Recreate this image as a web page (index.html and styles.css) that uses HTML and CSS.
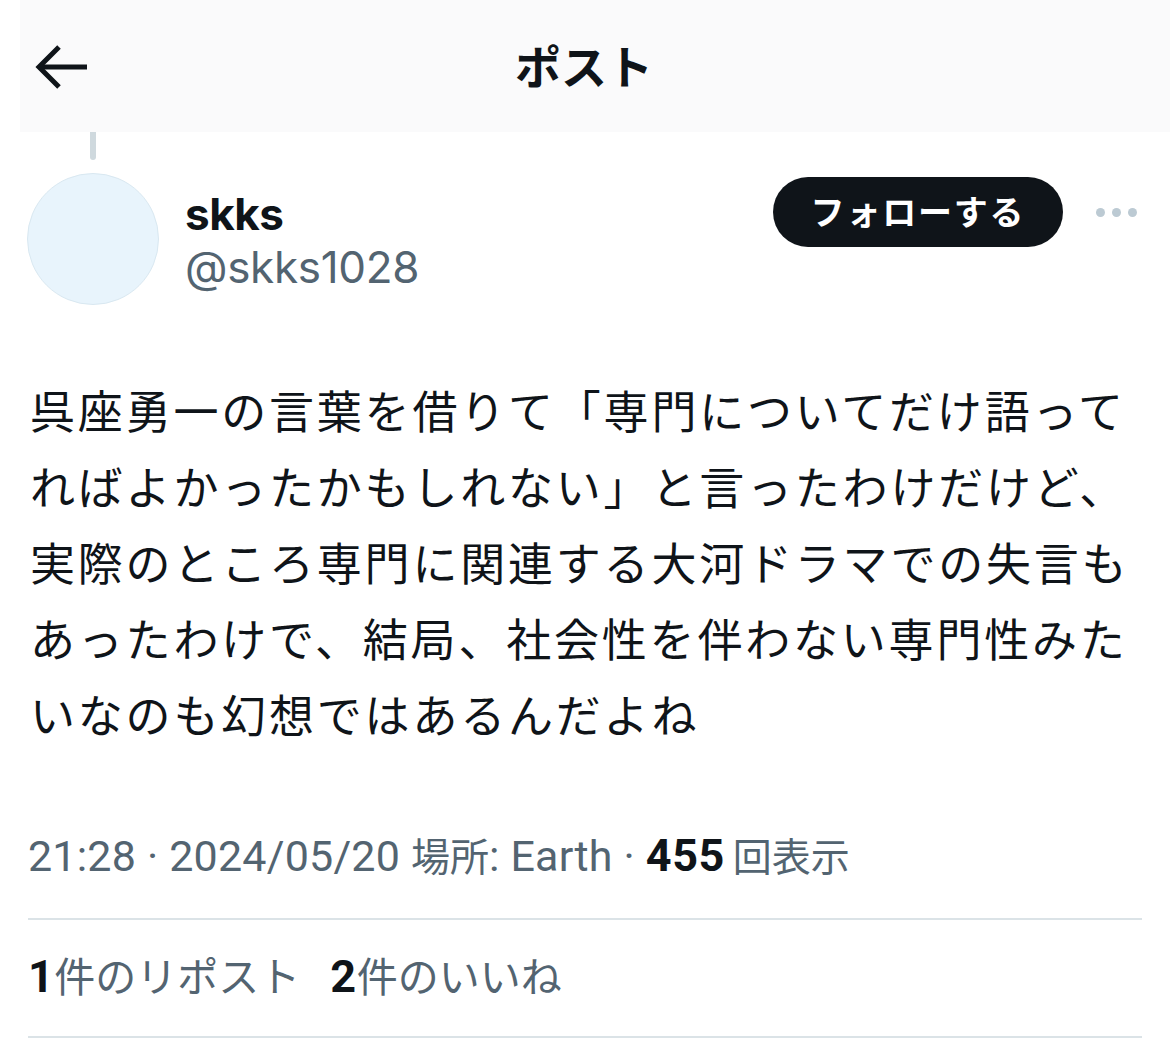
FILE: index.html
```html
<!DOCTYPE html>
<html lang="ja">
<head>
<meta charset="utf-8">
<link rel="stylesheet" href="styles.css">
</head>
<body>
<div class="page">
  <header class="topbar">
    <div class="back">
      <svg width="54" height="46" viewBox="0 0 54 46" fill="none" stroke="#0f1419" stroke-width="5" stroke-linecap="butt" stroke-linejoin="miter">
        <path d="M24 3 L4 23 L24 43"/>
        <path d="M4 23 H52"/>
      </svg>
    </div>
    <h1 class="title">ポスト</h1>
    <div></div>
  </header>

  <div class="thread"></div>

  <div class="author">
    <div class="avatar"></div>
    <div class="names">
      <div class="name">skks</div>
      <div class="handle">@skks1028</div>
    </div>
    <div class="actions">
      <button class="follow">フォローする</button>
      <div class="more"><span></span><span></span><span></span></div>
    </div>
  </div>

  <p class="text">呉座勇一の言葉を借りて「専門についてだけ語ってればよかったかもしれない」と言ったわけだけど、実際のところ専門に関連する大河ドラマでの失言もあったわけで、結局、社会性を伴わない専門性みたいなのも幻想ではあるんだよね</p>

  <div class="meta">21:28 · 2024/05/20 <span class="jp">場所</span>: Earth · <b>455</b><span class="jp views">回表示</span></div>

  <div class="stats"><b>1</b><span class="jp">件のリポスト</span><span class="gap"></span><b>2</b><span class="jp">件のいいね</span></div>
</div>
</body>
</html>
```

FILE: styles.css
```css
html, body {
  margin: 0;
  padding: 0;
  background: #ffffff;
}
body {
  font-family: "Inter", "Noto Sans CJK JP", sans-serif;
  color: #0f1419;
}
.page {
  width: 1170px;
  height: 1038px;
  overflow: hidden;
}
.topbar {
  display: grid;
  grid-template-columns: 1fr auto 1fr;
  align-items: center;
  height: 132px;
  margin-left: 20px;
  background: #fafafb;
}
.back {
  padding-left: 15px;
  display: flex;
  align-items: center;
  padding-top: 2px;
}
.title {
  margin: 0;
  font-family: "Noto Sans CJK JP", sans-serif;
  font-weight: 700;
  font-size: 46px;
  line-height: 1;
  position: relative;
  left: -11px;
  top: -2px;
}
.thread {
  width: 6px;
  height: 28px;
  margin-left: 90px;
  background: #cfd9de;
  border-radius: 0 0 3px 3px;
}
.author {
  display: flex;
  align-items: flex-start;
  margin-top: 13px;
  padding: 0 28px 0 27px;
}
.avatar {
  width: 132px;
  height: 132px;
  border-radius: 50%;
  background: #e8f4fc;
  border: 1px solid #d9e8f1;
  box-sizing: border-box;
  flex: none;
}
.names {
  margin-left: 26px;
  padding-top: 13px;
  flex: 1;
}
.name {
  font-weight: 700;
  font-size: 44px;
  line-height: 56px;
  letter-spacing: -0.5px;
}
.handle {
  font-size: 44px;
  line-height: 50px;
  color: #536471;
  letter-spacing: -0.3px;
}
.actions {
  display: flex;
  align-items: center;
  padding-top: 4px;
}
.follow {
  width: 290px;
  height: 70px;
  border: none;
  border-radius: 35px;
  background: #0f1419;
  color: #ffffff;
  font-family: "Noto Sans CJK JP", sans-serif;
  font-weight: 700;
  font-size: 34px;
  letter-spacing: 1.8px;
  padding: 0 0 3px;
}
.more {
  display: flex;
  gap: 7px;
  margin-left: 33px;
  margin-right: 5px;
}
.more span {
  width: 9px;
  height: 9px;
  border-radius: 50%;
  background: #bccad3;
}
.text {
  margin: 67px 28px 0 30px;
  font-family: "Noto Sans CJK JP", sans-serif;
  font-size: 45px;
  line-height: 76px;
  letter-spacing: 2.8px;
  color: #0f1419;
}
.meta {
  margin: 74px 28px 0 28px;
  padding-bottom: 34px;
  border-bottom: 2px solid #dbe3e7;
  font-family: "Roboto", "Noto Sans CJK JP", sans-serif;
  font-size: 43px;
  line-height: 56px;
  letter-spacing: 0.2px;
  color: #536471;
}
.meta .jp {
  font-family: "Noto Sans CJK JP", sans-serif;
  font-size: 39px;
  letter-spacing: 0;
}
.meta .views {
  margin-left: 8px;
}
.stats .jp {
  font-family: "Noto Sans CJK JP", sans-serif;
  font-size: 41px;
}
.meta b, .stats b {
  color: #0f1419;
  font-weight: 700;
  font-size: 45px;
  letter-spacing: 0.5px;
}
.stats {
  margin: 0 28px;
  padding: 26px 0 31px;
  border-bottom: 2px solid #dbe3e7;
  font-family: "Roboto", "Noto Sans CJK JP", sans-serif;
  font-size: 42px;
  line-height: 56px;
  color: #536471;
  display: flex;
  align-items: baseline;
}
.stats .gap {
  width: 30px;
}
```
